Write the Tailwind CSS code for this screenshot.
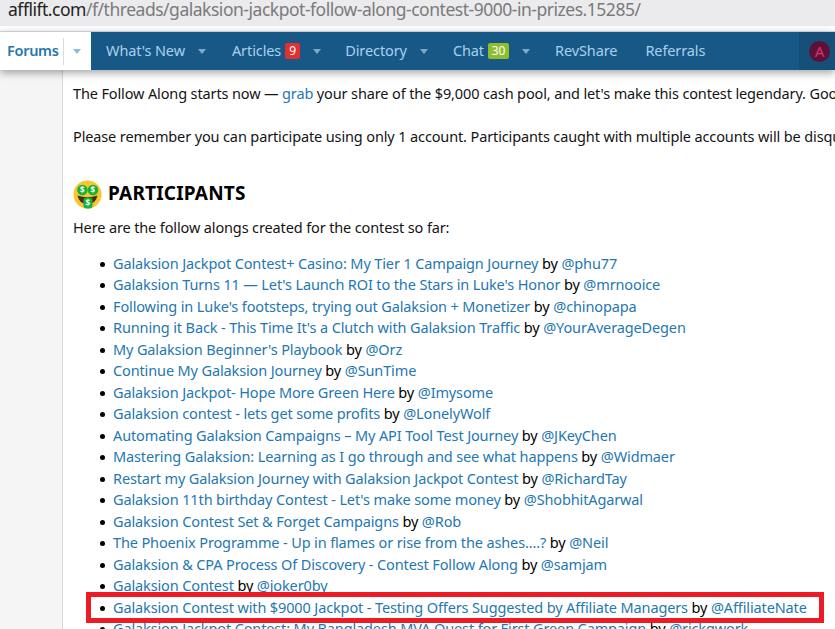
<!DOCTYPE html>
<html lang="en">
<head>
  <meta charset="UTF-8" />
  <title>Galaksion Jackpot Follow Along Contest</title>
  <script src="https://cdn.jsdelivr.net/npm/@tailwindcss/browser@4"></script>
</head>
<body class="w-[835px] h-[629px] overflow-hidden relative bg-white font-['Noto_Sans',sans-serif] text-[14.5px] text-[#141414]">

  <!-- address bar -->
  <div class="h-[26px] bg-[#ebebed] pl-2 text-[17.5px] leading-[18px] tracking-[-0.48px] text-[#7a7a7a] whitespace-nowrap overflow-hidden"><span class="text-[#222]">afflift.com</span>/f/threads/galaksion-jackpot-follow-along-contest-9000-in-prizes.15285/</div>
  <div class="h-[5px] bg-white"></div>

  <!-- nav -->
  <nav class="relative z-10 h-[39px] border-t border-[#c4ced6] bg-[#185886] flex items-stretch shadow-[0_3px_8px_rgba(0,0,0,0.35)] text-[#a9d1ee] tracking-[-0.1px] whitespace-nowrap">
    <div class="w-[91px] bg-white flex items-center pl-[7px] text-[#2577b1] font-semibold tracking-[-0.3px]">
      <span>Forums</span>
      <span class="ml-[4px] h-[27px] border-l border-[#cfe0ec] pl-[9px] flex items-center"><span class="w-0 h-0 border-x-[4.5px] border-x-transparent border-t-[5px] border-t-[#8fb9d6]"></span></span>
    </div>
    <div class="flex items-center pl-[15px]">
      <span>What's New</span>
      <span class="ml-[13px] w-0 h-0 border-x-[4.5px] border-x-transparent border-t-[5px] border-t-[#7fa9c8]"></span>
      <span class="ml-[26px]">Articles</span>
      <span class="ml-[4px] w-[15px] h-[16px] rounded-[2px] bg-[#e03030] text-white text-[12px] leading-[16px] text-center">9</span>
      <span class="ml-[13px] w-0 h-0 border-x-[4.5px] border-x-transparent border-t-[5px] border-t-[#7fa9c8]"></span>
      <span class="ml-[24px]">Directory</span>
      <span class="ml-[13px] w-0 h-0 border-x-[4.5px] border-x-transparent border-t-[5px] border-t-[#7fa9c8]"></span>
      <span class="ml-[25px]">Chat</span>
      <span class="ml-[4px] w-[21px] h-[16px] rounded-[2px] bg-[#8fbe2c] text-white text-[12px] leading-[16px] text-center">30</span>
      <span class="ml-[13px] w-0 h-0 border-x-[4.5px] border-x-transparent border-t-[5px] border-t-[#7fa9c8]"></span>
      <span class="ml-[25px]">RevShare</span>
      <span class="ml-[28px]">Referrals</span>
    </div>
    <div class="absolute left-[799px] right-0 top-0 bottom-0 bg-[#164f78] pl-[10px] flex items-center">
      <span class="w-[21px] h-[21px] rounded-full bg-[#5c1238] text-[#d8336f] text-[15px] leading-[21px] text-center">A</span>
    </div>
  </nav>

  <!-- page -->
  <div class="flex h-[559px]">
    <div class="w-[63px] shrink-0 bg-[#f5f5f5] border-r border-[#d8d8d8]"></div>
    <main class="pl-[10px] pt-[13px] leading-[21.5px] tracking-[-0.13px] whitespace-nowrap">
      <p>The Follow Along starts now — <a class="text-[#2577b1]">grab</a> your share of the $9,000 cash pool, and let's make this contest legendary. Good luck to all!</p>
      <p class="mt-[21.5px]">Please remember you can participate using only 1 account. Participants caught with multiple accounts will be disqualified.</p>

      <h2 class="mt-[30.7px] flex items-center gap-[6px] h-[32px] text-[19px] font-bold text-black tracking-[0.2px]">
        <svg width="29" height="29" viewBox="0 0 29 29">
          <circle cx="14.5" cy="14.5" r="14" fill="#fbc52c" />
          <path d="M4.5 15.5 Q14.5 19 24.5 15.5 Q23 24 14.5 24 Q6 24 4.5 15.5Z" fill="#4a2f10" />
          <circle cx="9.4" cy="10" r="5.3" fill="#12b53a" />
          <circle cx="20" cy="10" r="5.3" fill="#12b53a" />
          <rect x="10.5" y="17.5" width="9" height="11" rx="3" fill="#12b53a" />
          <text x="9.4" y="13" font-size="8" font-weight="700" fill="#fff" text-anchor="middle">$</text>
          <text x="20" y="13" font-size="8" font-weight="700" fill="#fff" text-anchor="middle">$</text>
          <text x="15" y="26" font-size="8" font-weight="700" fill="#fff" text-anchor="middle">$</text>
        </svg>
        PARTICIPANTS
      </h2>
      <p class="mt-[7px]">Here are the follow alongs created for the contest so far:</p>

      <ul class="mt-[14px] ml-[40px] text-black [&_a]:text-[#2577b1] [&>li]:before:content-[''] [&>li]:before:inline-block [&>li]:before:w-[5px] [&>li]:before:h-[5px] [&>li]:before:rounded-full [&>li]:before:bg-black [&>li]:before:-ml-[13px] [&>li]:before:mr-[8px] [&>li]:before:align-[2px]">
        <li><a>Galaksion Jackpot Contest+ Casino: My Tier 1 Campaign Journey</a> by <a>@phu77</a></li>
        <li><a>Galaksion Turns 11 — Let's Launch ROI to the Stars in Luke's Honor</a> by <a>@mrnooice</a></li>
        <li><a>Following in Luke's footsteps, trying out Galaksion + Monetizer</a> by <a>@chinopapa</a></li>
        <li><a>Running it Back - This Time It's a Clutch with Galaksion Traffic</a> by <a>@YourAverageDegen</a></li>
        <li><a>My Galaksion Beginner's Playbook</a> by <a>@Orz</a></li>
        <li><a>Continue My Galaksion Journey</a> by <a>@SunTime</a></li>
        <li><a>Galaksion Jackpot- Hope More Green Here</a> by <a>@Imysome</a></li>
        <li><a>Galaksion contest - lets get some profits</a> by <a>@LonelyWolf</a></li>
        <li><a>Automating Galaksion Campaigns – My API Tool Test Journey</a> by <a>@JKeyChen</a></li>
        <li><a>Mastering Galaksion: Learning as I go through and see what happens</a> by <a>@Widmaer</a></li>
        <li><a>Restart my Galaksion Journey with Galaksion Jackpot Contest</a> by <a>@RichardTay</a></li>
        <li><a>Galaksion 11th birthday Contest - Let's make some money</a> by <a>@ShobhitAgarwal</a></li>
        <li><a>Galaksion Contest Set &amp; Forget Campaigns</a> by <a>@Rob</a></li>
        <li><a>The Phoenix Programme - Up in flames or rise from the ashes....?</a> by <a>@Neil</a></li>
        <li><a>Galaksion &amp; CPA Process Of Discovery - Contest Follow Along</a> by <a>@samjam</a></li>
        <li><a>Galaksion Contest</a> by <a>@joker0by</a></li>
        <li><a>Galaksion Contest with $9000 Jackpot - Testing Offers Suggested by Affiliate Managers</a> by <a>@AffiliateNate</a></li>
        <li><a>Galaksion Jackpot Contest: My Bangladesh MVA Quest for First Green Campaign</a> by <a>@rickgwork</a></li>
      </ul>
    </main>
  </div>

  <!-- red annotation box -->
  <div class="absolute left-[86px] top-[592px] w-[738px] h-[31px] border-[5px] border-[#ed1c24]"></div>
</body>
</html>
